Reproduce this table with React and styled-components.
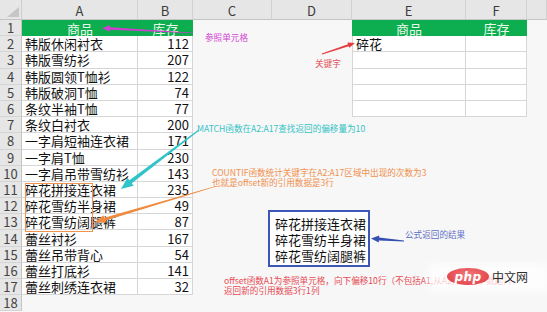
import React from "react";
import styled, { createGlobalStyle, css } from "styled-components";

const GlobalStyle = createGlobalStyle`
  html, body { margin: 0; padding: 0; background: #f7f7f7; }
  body { font-family: "Noto Sans CJK SC", "Noto Sans", sans-serif; }
  * { box-sizing: border-box; }
`;

const COLS = [22, 116, 55, 79, 80, 114, 61];
const LETTERS = ["A", "B", "C", "D", "E", "F", ""];

const DATA = [
  ["韩版休闲衬衣", 112],
  ["韩版雪纺衫", 207],
  ["韩版圆领T恤衫", 122],
  ["韩版破洞T恤", 74],
  ["条纹半袖T恤", 77],
  ["条纹白衬衣", 200],
  ["一字肩短袖连衣裙", 171],
  ["一字肩T恤", 230],
  ["一字肩吊带雪纺衫", 143],
  ["碎花拼接连衣裙", 235],
  ["碎花雪纺半身裙", 49],
  ["碎花雪纺阔腿裤", 87],
  ["蕾丝衬衫", 167],
  ["蕾丝吊带背心", 54],
  ["蕾丝打底衫", 141],
  ["蕾丝刺绣连衣裙", 32],
];

const Sheet = styled.div`
  position: relative;
  width: 547px;
  height: 312px;
  overflow: hidden;
  display: grid;
  grid-template-columns: ${COLS.map((c) => c + "px").join(" ")} 1fr;
  grid-template-rows: 20px repeat(18, 16.2px);
  background: #f7f7f7;
  font-family: "Noto Sans CJK SC", sans-serif;
`;

const Corner = styled.div`
  position: relative;
  background: #e6e6e6;
  border-right: 1px solid #cdcdcd;
  border-bottom: 1px solid #c4c4c4;
  &::after {
    content: "";
    position: absolute;
    right: 2px;
    bottom: 2px;
    width: 0;
    height: 0;
    border-left: 12px solid transparent;
    border-bottom: 10px solid #c6c6c6;
  }
`;

const ColHead = styled.div`
  background: #e6e6e6;
  border-right: 1px solid #d2d2d2;
  border-bottom: 1px solid #c4c4c4;
  display: flex;
  align-items: center;
  justify-content: center;
  font-size: 13px;
  line-height: 1;
  color: #3c3c3c;
  padding-top: 2px;
`;

const RowHead = styled.div`
  background: #e6e6e6;
  border-right: 1px solid #c4c4c4;
  border-bottom: 1px solid #d4d4d4;
  display: flex;
  align-items: center;
  justify-content: center;
  font-size: 13px;
  line-height: 1;
  color: #444;
`;

const Cell = styled.div`
  display: flex;
  align-items: center;
  font-size: 13px;
  line-height: 1;
  white-space: nowrap;
  overflow: visible;
  justify-content: ${(p) =>
    p.$align === "right" ? "flex-end" : p.$align === "center" ? "center" : "flex-start"};
  padding: 0 3px;
  ${(p) =>
    p.$kind === "green" &&
    css`
      background: #0cae4f;
      color: #e9f7ea;
    `}
  ${(p) =>
    p.$kind === "data" &&
    css`
      background: #ffffff;
      color: #111;
      border-right: 1px solid #d6d6d6;
      border-bottom: 1px solid #d6d6d6;
    `}
  ${(p) =>
    p.$edge &&
    css`
      border-left: 1px solid #d6d6d6;
    `}
  position: relative;
  z-index: ${(p) => (p.$kind === "data" ? 1 : 0)};
`;

const Overlay = styled.svg`
  position: absolute;
  left: 0;
  top: 0;
  width: 547px;
  height: 312px;
  pointer-events: none;
  z-index: 5;
`;

const Note = styled.div`
  position: absolute;
  left: ${(p) => p.$x}px;
  top: ${(p) => p.$y}px;
  font-size: 8.6px;
  line-height: 10.5px;
  color: ${(p) => p.$color};
  white-space: nowrap;
  z-index: 6;
`;

const HighlightBox = styled.div`
  position: absolute;
  left: 25px;
  top: 183px;
  width: 68px;
  height: 49px;
  border: 1.5px solid #f0934e;
  z-index: 6;
`;

const ResultBox = styled.div`
  position: absolute;
  left: 268px;
  top: 210px;
  width: 102px;
  height: 57px;
  border: 2px solid #3d57b6;
  background: #ffffff;
  padding: 4px 0 0 5px;
  display: flex;
  flex-direction: column;
  font-size: 13px;
  line-height: 16px;
  color: #111;
  z-index: 6;
`;

const Haze = styled.div`
  position: absolute;
  left: 428px;
  top: 264px;
  width: 122px;
  height: 28px;
  background: rgba(255, 255, 255, 0.75);
  filter: blur(4px);
  z-index: 7;
`;

const Watermark = styled.div`
  position: absolute;
  left: 447px;
  top: 268px;
  display: flex;
  align-items: center;
  gap: 3px;
  z-index: 8;
`;

const PhpBadge = styled.div`
  width: 42px;
  height: 17px;
  border-radius: 50%;
  background: radial-gradient(ellipse at 50% 40%, #f27a7e 0%, #e5494f 70%, #e0454c 100%);
  display: flex;
  align-items: center;
  justify-content: center;
  color: #fff;
  font-family: "DejaVu Sans", sans-serif;
  font-style: italic;
  font-weight: bold;
  font-size: 12px;
  line-height: 1;
  letter-spacing: 0.5px;
`;

const WmText = styled.span`
  font-size: 12px;
  color: #2e2e2e;
  line-height: 1;
`;

function arrow(x1, y1, x2, y2, tail, body, headLen, headW) {
  const dx = x2 - x1;
  const dy = y2 - y1;
  const L = Math.hypot(dx, dy);
  const ux = dx / L;
  const uy = dy / L;
  const nx = -uy;
  const ny = ux;
  const bx = x2 - ux * headLen;
  const by = y2 - uy * headLen;
  const pts = [
    [x1 + (nx * tail) / 2, y1 + (ny * tail) / 2],
    [bx + (nx * body) / 2, by + (ny * body) / 2],
    [bx + (nx * headW) / 2, by + (ny * headW) / 2],
    [x2, y2],
    [bx - (nx * headW) / 2, by - (ny * headW) / 2],
    [bx - (nx * body) / 2, by - (ny * body) / 2],
    [x1 - (nx * tail) / 2, y1 - (ny * tail) / 2],
  ];
  return pts.map((p) => p.map((v) => v.toFixed(2)).join(",")).join(" ");
}

function cellFor(row, col) {
  // col: 1..7 => A..G
  if (col === 1 || col === 2) {
    if (row === 1)
      return { kind: "green", align: "center", text: col === 1 ? "商品" : "库存" };
    if (row >= 2 && row <= 17) {
      const d = DATA[row - 2];
      return col === 1
        ? { kind: "data", align: "left", text: d[0] }
        : { kind: "data", align: "right", text: d[1] };
    }
  }
  if (col === 5 || col === 6) {
    if (row === 1)
      return { kind: "green", align: "center", text: col === 5 ? "商品" : "库存" };
    if (row >= 2 && row <= 6)
      return {
        kind: "data",
        align: "left",
        edge: col === 5,
        text: row === 2 && col === 5 ? "碎花" : "",
      };
  }
  return { kind: "blank", align: "left", text: "" };
}

export default function App() {
  const rows = [];
  for (let r = 1; r <= 18; r++) {
    rows.push(<RowHead key={"rh" + r}>{r}</RowHead>);
    for (let c = 1; c <= 7; c++) {
      const cell = cellFor(r, c);
      rows.push(
        <Cell key={r + "-" + c} $kind={cell.kind} $align={cell.align} $edge={cell.edge}>
          {cell.text}
        </Cell>
      );
    }
  }

  return (
    <>
      <GlobalStyle />
      <Sheet>
        <Corner />
        {LETTERS.map((l, i) => (
          <ColHead key={"ch" + i}>{l}</ColHead>
        ))}
        {rows}

        <HighlightBox />

        <ResultBox>
          <span>碎花拼接连衣裙</span>
          <span>碎花雪纺半身裙</span>
          <span>碎花雪纺阔腿裤</span>
        </ResultBox>

        <Note $x={205} $y={31.5} $color="#d246d2">参照单元格</Note>
        <Note $x={315} $y={58} $color="#e4505a">关键字</Note>
        <Note $x={197} $y={122.5} $color="#35c3c6">MATCH函数在A2:A17查找返回的偏移量为10</Note>
        <Note $x={212} $y={166.5} $color="#f0904d">
          COUNTIF函数统计关键字在A2:A17区域中出现的次数为3
          <br />
          也就是offset新的引用数据是3行
        </Note>
        <Note $x={405} $y={228.5} $color="#5f6fc6">公式返回的结果</Note>
        <Note $x={224} $y={274.5} $color="#e84a55">
          offset函数A1为参照单元格，向下偏移10行（不包括A1,从A2开始往下数起），
          <br />
          返回新的引用数据3行1列
        </Note>

        <Overlay viewBox="0 0 547 312">
          <polygon points={arrow(193, 33, 102, 28, 0.6, 2.6, 8, 6.5)} fill="#cf3fd0" />
          <polygon points={arrow(322, 54, 355, 43, 1, 2, 7, 5.5)} fill="#e63a3e" />
          <polygon points={arrow(199, 130, 121, 189, 1, 4, 12, 10)} fill="#2fc4c8" />
          <polygon points={arrow(217, 186, 95, 222, 0.6, 3.2, 10, 8)} fill="#f08a3e" />
          <polygon points={arrow(404, 241, 371, 238.5, 0.8, 3, 8, 7)} fill="#3550b0" />
        </Overlay>

        <Haze />
        <Watermark>
          <PhpBadge>php</PhpBadge>
          <WmText>中文网</WmText>
        </Watermark>
      </Sheet>
    </>
  );
}
